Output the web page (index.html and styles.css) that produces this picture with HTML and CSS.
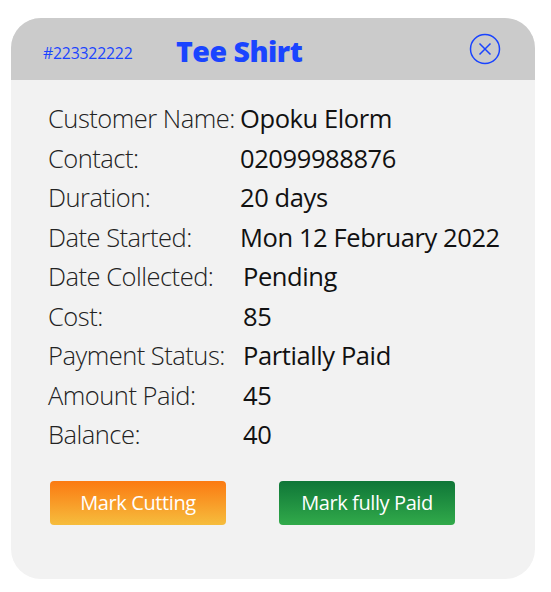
FILE: index.html
```html
<!DOCTYPE html>
<html lang="en">
<head>
<meta charset="UTF-8">
<meta name="viewport" content="width=device-width, initial-scale=1">
<title>Order Details</title>
<link rel="stylesheet" href="styles.css">
</head>
<body>

<div class="card">
	<div class="card_head">
		<span class="order_no">#223322222</span>
		<span class="order_title">Tee Shirt</span>
		<a class="close" href="#">
			<svg width="32" height="32" viewBox="0 0 32 32">
				<circle cx="16" cy="16" r="14.5" fill="none" stroke="#1a44ff" stroke-width="1.5"/>
				<path d="M10.5 10.5 L21.5 21.5 M21.5 10.5 L10.5 21.5" stroke="#1a44ff" stroke-width="1.5" fill="none"/>
			</svg>
		</a>
	</div>
	<div class="card_body">
		<dl class="info">
			<dt>Customer Name:</dt><dd>Opoku Elorm</dd>
			<dt>Contact:</dt><dd>02099988876</dd>
			<dt>Duration:</dt><dd>20 days</dd>
			<dt>Date Started:</dt><dd>Mon 12 February 2022</dd>
			<dt>Date Collected:</dt><dd class="nudge">Pending</dd>
			<dt>Cost:</dt><dd class="nudge">85</dd>
			<dt>Payment Status:</dt><dd class="nudge">Partially Paid</dd>
			<dt>Amount Paid:</dt><dd class="nudge">45</dd>
			<dt>Balance:</dt><dd class="nudge">40</dd>
		</dl>
		<div class="actions">
			<button class="btn btn_orange">Mark Cutting</button>
			<button class="btn btn_green">Mark fully Paid</button>
		</div>
	</div>
</div>

</body>
</html>
```

FILE: styles.css
```css
*,
*::before,
*::after {
	margin: 0;
	padding: 0;
	box-sizing: border-box;
}
HTML, BODY {
	width: 100%;
	height: 100%;
}
BODY {
	background-color: #fff;
	font-family: "Open Sans", "Noto Sans", sans-serif;
	color: #111;
	padding: 18px 16px 0 11px;
}

.card {
	width: 524px;
	height: 561px;
	background: #f2f2f2;
	border-radius: 30px;
	overflow: hidden;
}

.card_head {
	height: 62px;
	background: #cbcbcb;
	display: flex;
	align-items: center;
	padding: 0 0 0 32px;
	color: #1a44ff;
}
.order_no {
	font-size: 15.8px;
	width: 133px;
	padding-top: 8px;
	letter-spacing: -0.2px;
}
.order_title {
	font-size: 28.5px;
	font-weight: 800;
	letter-spacing: -0.5px;
	padding-top: 3px;
}
.close {
	margin-left: auto;
	margin-right: 34px;
	display: flex;
	padding-bottom: 1px;
}

.card_body {
	padding: 19px 0 0 37px;
}

.info {
	display: grid;
	grid-template-columns: 192px 1fr;
	font-size: 25.5px;
	line-height: 39.5px;
}
.info dt {
	font-weight: 300;
	color: #222;
	letter-spacing: -0.5px;
	white-space: nowrap;
}
.info dd {
	color: #111;
	letter-spacing: -0.4px;
	white-space: nowrap;
}
.info dd.nudge {
	padding-left: 3px;
}

.actions {
	display: flex;
	gap: 53px;
	padding: 26px 0 0 2px;
}
.btn {
	width: 176px;
	height: 44px;
	border: none;
	border-radius: 4px;
	color: #fff;
	font-family: inherit;
	font-size: 20px;
	letter-spacing: -0.4px;
	cursor: pointer;
}
.btn_orange {
	background: linear-gradient(#fb7a12, #f6bd3d);
}
.btn_green {
	background: linear-gradient(#0f7638, #31aa4a);
}
```
